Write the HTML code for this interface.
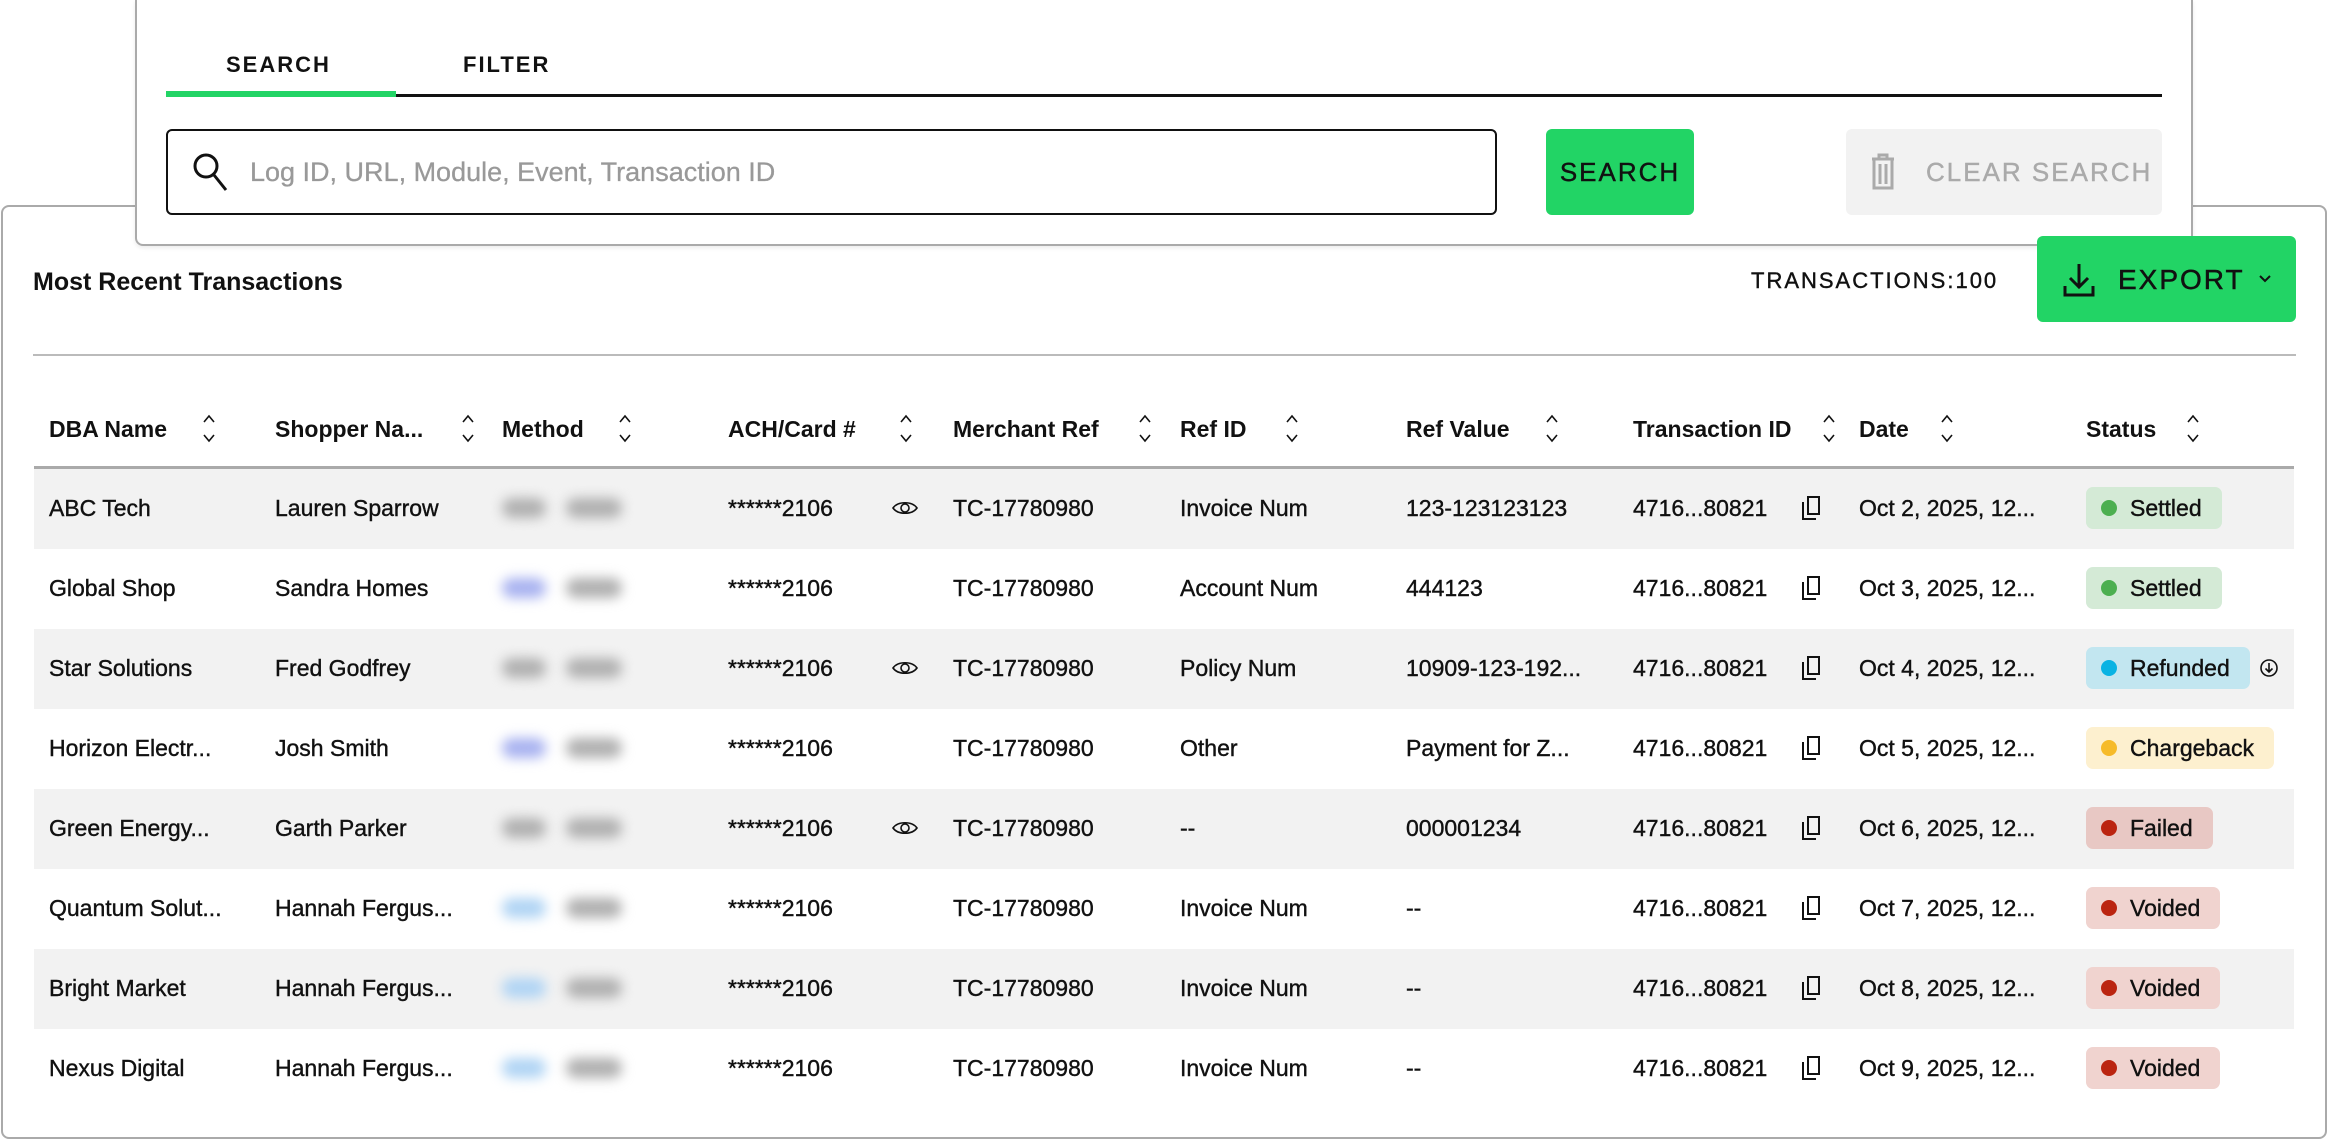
<!DOCTYPE html>
<html><head><meta charset="utf-8"><style>
*{box-sizing:border-box;margin:0;padding:0}
body{width:2328px;height:1140px;background:#fff;position:relative;overflow:hidden;font-family:"Liberation Sans",sans-serif;color:#111}
.a{position:absolute}
.main{left:1px;top:205px;width:2326px;height:934px;border:2px solid #aaa;border-radius:8px;background:#fff}
.top{left:135px;top:0;width:2058px;height:246px;border:2px solid #aaa;border-top:none;border-radius:0 0 8px 8px;background:#fff;box-shadow:0 2px 4px rgba(0,0,0,.08)}
.tab{font-weight:bold;font-size:22px;letter-spacing:2px;top:52px}
.th{font-weight:bold;font-size:23px;top:416px;white-space:nowrap}
.td{font-size:23px;white-space:nowrap;-webkit-text-stroke:0.4px #111}
.row{left:34px;width:2260px;height:80px}
.blob{height:20px;border-radius:10px;filter:blur(6px)}
.badge{height:42px;border-radius:7px;font-size:23px;padding:0 20px 0 44px;line-height:42px;-webkit-text-stroke:0.4px #111}
.badge i{position:absolute;left:15px;top:13px;width:16px;height:16px;border-radius:50%}
</style></head><body>
<div class="a main"></div>
<div class="a top"></div>
<div class="a tab" style="left:226px">SEARCH</div>
<div class="a tab" style="left:463px">FILTER</div>
<div class="a" style="left:166px;top:94px;width:1996px;height:3px;background:#111"></div>
<div class="a" style="left:166px;top:91px;width:230px;height:6px;background:#22d465"></div>
<div class="a" style="left:166px;top:129px;width:1331px;height:86px;border:2.5px solid #111;border-radius:6px"></div>
<svg class="a" style="left:190px;top:150px" width="40" height="44" viewBox="0 0 40 44"><circle cx="16" cy="16" r="11" fill="none" stroke="#111" stroke-width="3"/><path d="M24 25 L36 40" stroke="#111" stroke-width="3"/></svg>
<div class="a" style="left:250px;top:157px;font-size:27px;color:#999;-webkit-text-stroke:0.3px #999">Log ID, URL, Module, Event, Transaction ID</div>
<div class="a" style="left:1546px;top:129px;width:148px;height:86px;background:#22d465;border-radius:6px;font-size:26px;letter-spacing:2px;line-height:86px;text-align:center;-webkit-text-stroke:0.4px #111">SEARCH</div>
<div class="a" style="left:1846px;top:129px;width:316px;height:86px;background:#f2f2f2;border-radius:6px;font-size:26px;letter-spacing:2px;line-height:86px;color:#aaa;padding-left:80px;-webkit-text-stroke:0.4px #aaa">CLEAR SEARCH</div>
<svg class="a" style="left:1869px;top:152px" width="28" height="38" viewBox="0 0 28 38"><path d="M3 7h22M10 7V3h8v4M5 7v29h18V7M11 12v20M17 12v20" fill="none" stroke="#aaa" stroke-width="3"/></svg>
<div class="a" style="left:33px;top:268px;font-size:25px;font-weight:bold">Most Recent Transactions</div>
<div class="a" style="left:1751px;top:268px;font-size:22px;letter-spacing:2px;-webkit-text-stroke:0.4px #111">TRANSACTIONS:100</div>
<div class="a" style="left:2037px;top:236px;width:259px;height:86px;background:#22d465;border-radius:6px"></div>
<svg class="a" style="left:2062px;top:262px" width="34" height="36" viewBox="0 0 34 36"><path d="M17 2v22M8 16l9 9 9-9M3 24v9h28v-9" fill="none" stroke="#111" stroke-width="3"/></svg>
<div class="a" style="left:2118px;top:264px;font-size:28px;letter-spacing:2px;-webkit-text-stroke:0.5px #111">EXPORT</div>
<svg class="a" style="left:2258px;top:274px" width="14" height="10" viewBox="0 0 14 10"><path d="M2 2l5 5 5-5" fill="none" stroke="#111" stroke-width="2"/></svg>
<div class="a" style="left:33px;top:354px;width:2263px;height:2px;background:#bbb"></div>
<div class="a" style="left:34px;top:466px;width:2260px;height:3px;background:#aaa"></div>

<div class="a th" style="left:49px">DBA Name</div>
<div class="a th" style="left:275px">Shopper Na...</div>
<div class="a th" style="left:502px">Method</div>
<div class="a th" style="left:728px">ACH/Card #</div>
<div class="a th" style="left:953px">Merchant Ref</div>
<div class="a th" style="left:1180px">Ref ID</div>
<div class="a th" style="left:1406px">Ref Value</div>
<div class="a th" style="left:1633px">Transaction ID</div>
<div class="a th" style="left:1859px">Date</div>
<div class="a th" style="left:2086px">Status</div>
<svg class="a" style="left:0;top:0" width="2328" height="1140">
<g fill="none" stroke="#111" stroke-width="1.6">
<path d="M204 422l5-6 5 6M204 435l5 6 5-6"/>
<path d="M463 422l5-6 5 6M463 435l5 6 5-6"/>
<path d="M620 422l5-6 5 6M620 435l5 6 5-6"/>
<path d="M901 422l5-6 5 6M901 435l5 6 5-6"/>
<path d="M1140 422l5-6 5 6M1140 435l5 6 5-6"/>
<path d="M1287 422l5-6 5 6M1287 435l5 6 5-6"/>
<path d="M1547 422l5-6 5 6M1547 435l5 6 5-6"/>
<path d="M1824 422l5-6 5 6M1824 435l5 6 5-6"/>
<path d="M1942 422l5-6 5 6M1942 435l5 6 5-6"/>
<path d="M2188 422l5-6 5 6M2188 435l5 6 5-6"/>
</g></svg>

<div class="a row" style="top:469px;background:#f2f2f2"></div>
<div class="a row" style="top:629px;background:#f2f2f2"></div>
<div class="a row" style="top:789px;background:#f2f2f2"></div>
<div class="a row" style="top:949px;background:#f2f2f2"></div>

<div id="rows"></div>
<script>
const d=[
["ABC Tech","Lauren Sparrow","#b0b0b0",1,"Invoice Num","123-123123123","Settled"],
["Global Shop","Sandra Homes","#a8b2f0",0,"Account Num","444123","Settled"],
["Star Solutions","Fred Godfrey","#b0b0b0",1,"Policy Num","10909-123-192...","Refunded"],
["Horizon Electr...","Josh Smith","#a8b2f0",0,"Other","Payment for Z...","Chargeback"],
["Green Energy...","Garth Parker","#b0b0b0",1,"--","000001234","Failed"],
["Quantum Solut...","Hannah Fergus...","#b0d4f4",0,"Invoice Num","--","Voided"],
["Bright Market","Hannah Fergus...","#b0d4f4",0,"Invoice Num","--","Voided"],
["Nexus Digital","Hannah Fergus...","#b0d4f4",0,"Invoice Num","--","Voided"]];
const st={Settled:["#d4ead6","#4caf50"],Refunded:["#c2e6f0","#09b3e3"],Chargeback:["#fdf0cf","#f6bb2a"],Failed:["#e8c8c4","#bb2410"],Voided:["#f0d3cf","#bb2410"]};
let h="";
d.forEach((r,i)=>{const c=508+i*80,t=c-13;
const T=(x,s)=>`<div class="a td" style="left:${x}px;top:${t}px">${s}</div>`;
h+=T(49,r[0])+T(275,r[1])+T(728,"******2106")+T(953,"TC-17780980")+T(1180,r[4])+T(1406,r[5])+T(1633,"4716...80821")+T(1859,"Oct "+(i+2)+", 2025, 12...");
h+=`<div class="a blob" style="left:502px;top:${c-10}px;width:44px;background:${r[2]}"></div><div class="a blob" style="left:566px;top:${c-10}px;width:56px;background:#b0b0b0"></div>`;
if(r[3])h+=`<svg class="a" style="left:891px;top:${c-9}px" width="28" height="18" viewBox="0 0 28 18"><path d="M2 9C7 2 21 2 26 9C21 16 7 16 2 9Z" fill="none" stroke="#111" stroke-width="1.6"/><circle cx="14" cy="9" r="4" fill="none" stroke="#111" stroke-width="1.6"/></svg>`;
h+=`<svg class="a" style="left:1799px;top:${c-13}px" width="24" height="26" viewBox="0 0 24 26"><path d="M9 2h11v17H9z M4 7v17h13" fill="none" stroke="#111" stroke-width="2"/></svg>`;
const s=st[r[6]];
h+=`<div class="a badge" style="left:2086px;top:${c-21}px;background:${s[0]}"><i style="background:${s[1]}"></i>${r[6]}</div>`;
if(r[6]=="Refunded")h+=`<svg class="a" style="left:2259px;top:${c-10}px" width="20" height="20" viewBox="0 0 20 20"><circle cx="10" cy="10" r="8" fill="none" stroke="#111" stroke-width="1.6"/><path d="M10 5v9M6.5 10.5L10 14l3.5-3.5" fill="none" stroke="#111" stroke-width="1.6"/></svg>`;
});
document.getElementById("rows").innerHTML=h;
</script>
</body></html>
